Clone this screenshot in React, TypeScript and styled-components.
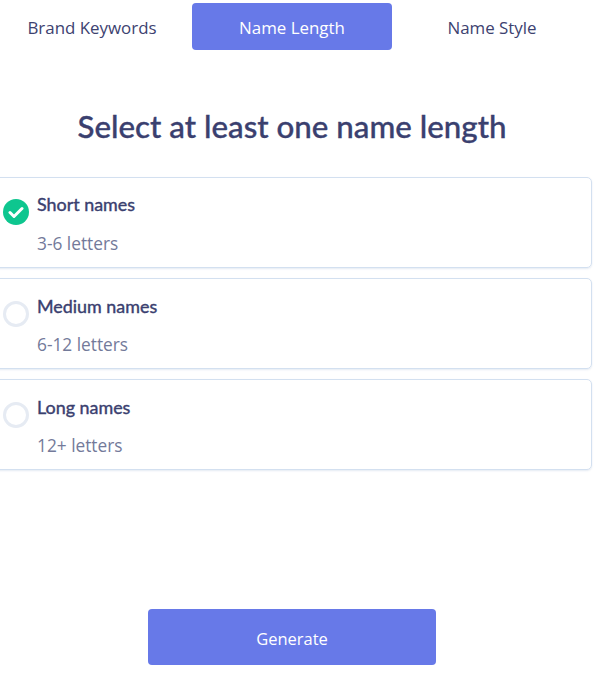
import styled, { createGlobalStyle } from 'styled-components';

const GlobalStyle = createGlobalStyle`
  html, body {
    margin: 0;
    padding: 0;
    background: #fff;
    overflow: hidden;
  }
`;

const Page = styled.div`
  width: 600px;
  height: 695px;
  margin-left: -8px;
  padding-top: 3px;
  box-sizing: border-box;
  display: flex;
  flex-direction: column;
  font-family: 'Open Sans', 'Noto Sans', sans-serif;
`;

const TabBar = styled.div`
  display: grid;
  grid-template-columns: repeat(3, 200px);
`;

const Tab = styled.div<{ $active?: boolean }>`
  height: 47px;
  padding-top: 1px;
  box-sizing: border-box;
  display: flex;
  align-items: center;
  justify-content: center;
  border-radius: 4px;
  font-size: 16.9px;
  background: ${(p) => (p.$active ? '#6779e8' : 'transparent')};
  color: ${(p) => (p.$active ? '#fff' : '#3d4270')};
`;

const Title = styled.h1`
  margin: 57px 0 30px;
  height: 40px;
  line-height: 38px;
  text-align: center;
  font-family: Lato, sans-serif;
  font-size: 31.3px;
  font-weight: 500;
  -webkit-text-stroke: 0.35px #3a406f;
  color: #3a406f;
`;

const CardList = styled.div`
  display: flex;
  flex-direction: column;
  gap: 10px;
`;

const CardName = styled.div`
  font-family: Lato, sans-serif;
  font-size: 17.9px;
  font-weight: 400;
  -webkit-text-stroke: 0.4px #3a406f;
  line-height: 22px;
  color: #3a406f;
`;

const CardHint = styled.div`
  margin-top: 17px;
  font-size: 17.3px;
  line-height: 24px;
  color: #737a9a;
`;

const Card = styled.div`
  height: 91px;
  box-sizing: border-box;
  border: 1px solid #d3e0f0;
  border-radius: 5px;
  box-shadow: 0 1px 2px rgba(120, 150, 190, 0.2);
  padding: 15px 0 0 10px;
  display: flex;
  gap: 8px;

  &:not(:first-child) {
    padding-top: 16px;
  }

  &:not(:first-child) ${CardHint} {
    margin-top: 16px;
  }
`;

const Check = styled.span<{ $checked?: boolean }>`
  width: 26px;
  height: 26px;
  margin-top: 6px;
  box-sizing: border-box;
  border-radius: 50%;
  flex: none;
  display: flex;
  align-items: center;
  justify-content: center;
  background: ${(p) => (p.$checked ? '#0ec68f' : '#fff')};
  border: ${(p) => (p.$checked ? 'none' : '3px solid #e6ebf3')};
`;

const Footer = styled.div`
  margin-top: 139px;
  display: flex;
  justify-content: center;
`;

const GenerateButton = styled.button`
  width: 288px;
  height: 56px;
  padding: 2px 0 0;
  border: none;
  border-radius: 4px;
  background: #6779e8;
  color: #fff;
  font-family: inherit;
  font-size: 16.5px;
`;

const options = [
  { name: 'Short names', hint: '3-6 letters', checked: true },
  { name: 'Medium names', hint: '6-12 letters', checked: false },
  { name: 'Long names', hint: '12+ letters', checked: false },
];

export default function App() {
  return (
    <>
      <GlobalStyle />
      <Page>
        <TabBar>
          <Tab>Brand Keywords</Tab>
          <Tab $active>Name Length</Tab>
          <Tab>Name Style</Tab>
        </TabBar>
        <Title>Select at least one name length</Title>
        <CardList>
          {options.map((o) => (
            <Card key={o.name}>
              <Check $checked={o.checked}>
                {o.checked && (
                  <svg width="16" height="13" viewBox="0 0 16 13" fill="none">
                    <path d="M2 6.5 L6 10.5 L14 2.5" stroke="#fff" strokeWidth="3" strokeLinecap="round" strokeLinejoin="round" />
                  </svg>
                )}
              </Check>
              <div>
                <CardName>{o.name}</CardName>
                <CardHint>{o.hint}</CardHint>
              </div>
            </Card>
          ))}
        </CardList>
        <Footer>
          <GenerateButton>Generate</GenerateButton>
        </Footer>
      </Page>
    </>
  );
}
